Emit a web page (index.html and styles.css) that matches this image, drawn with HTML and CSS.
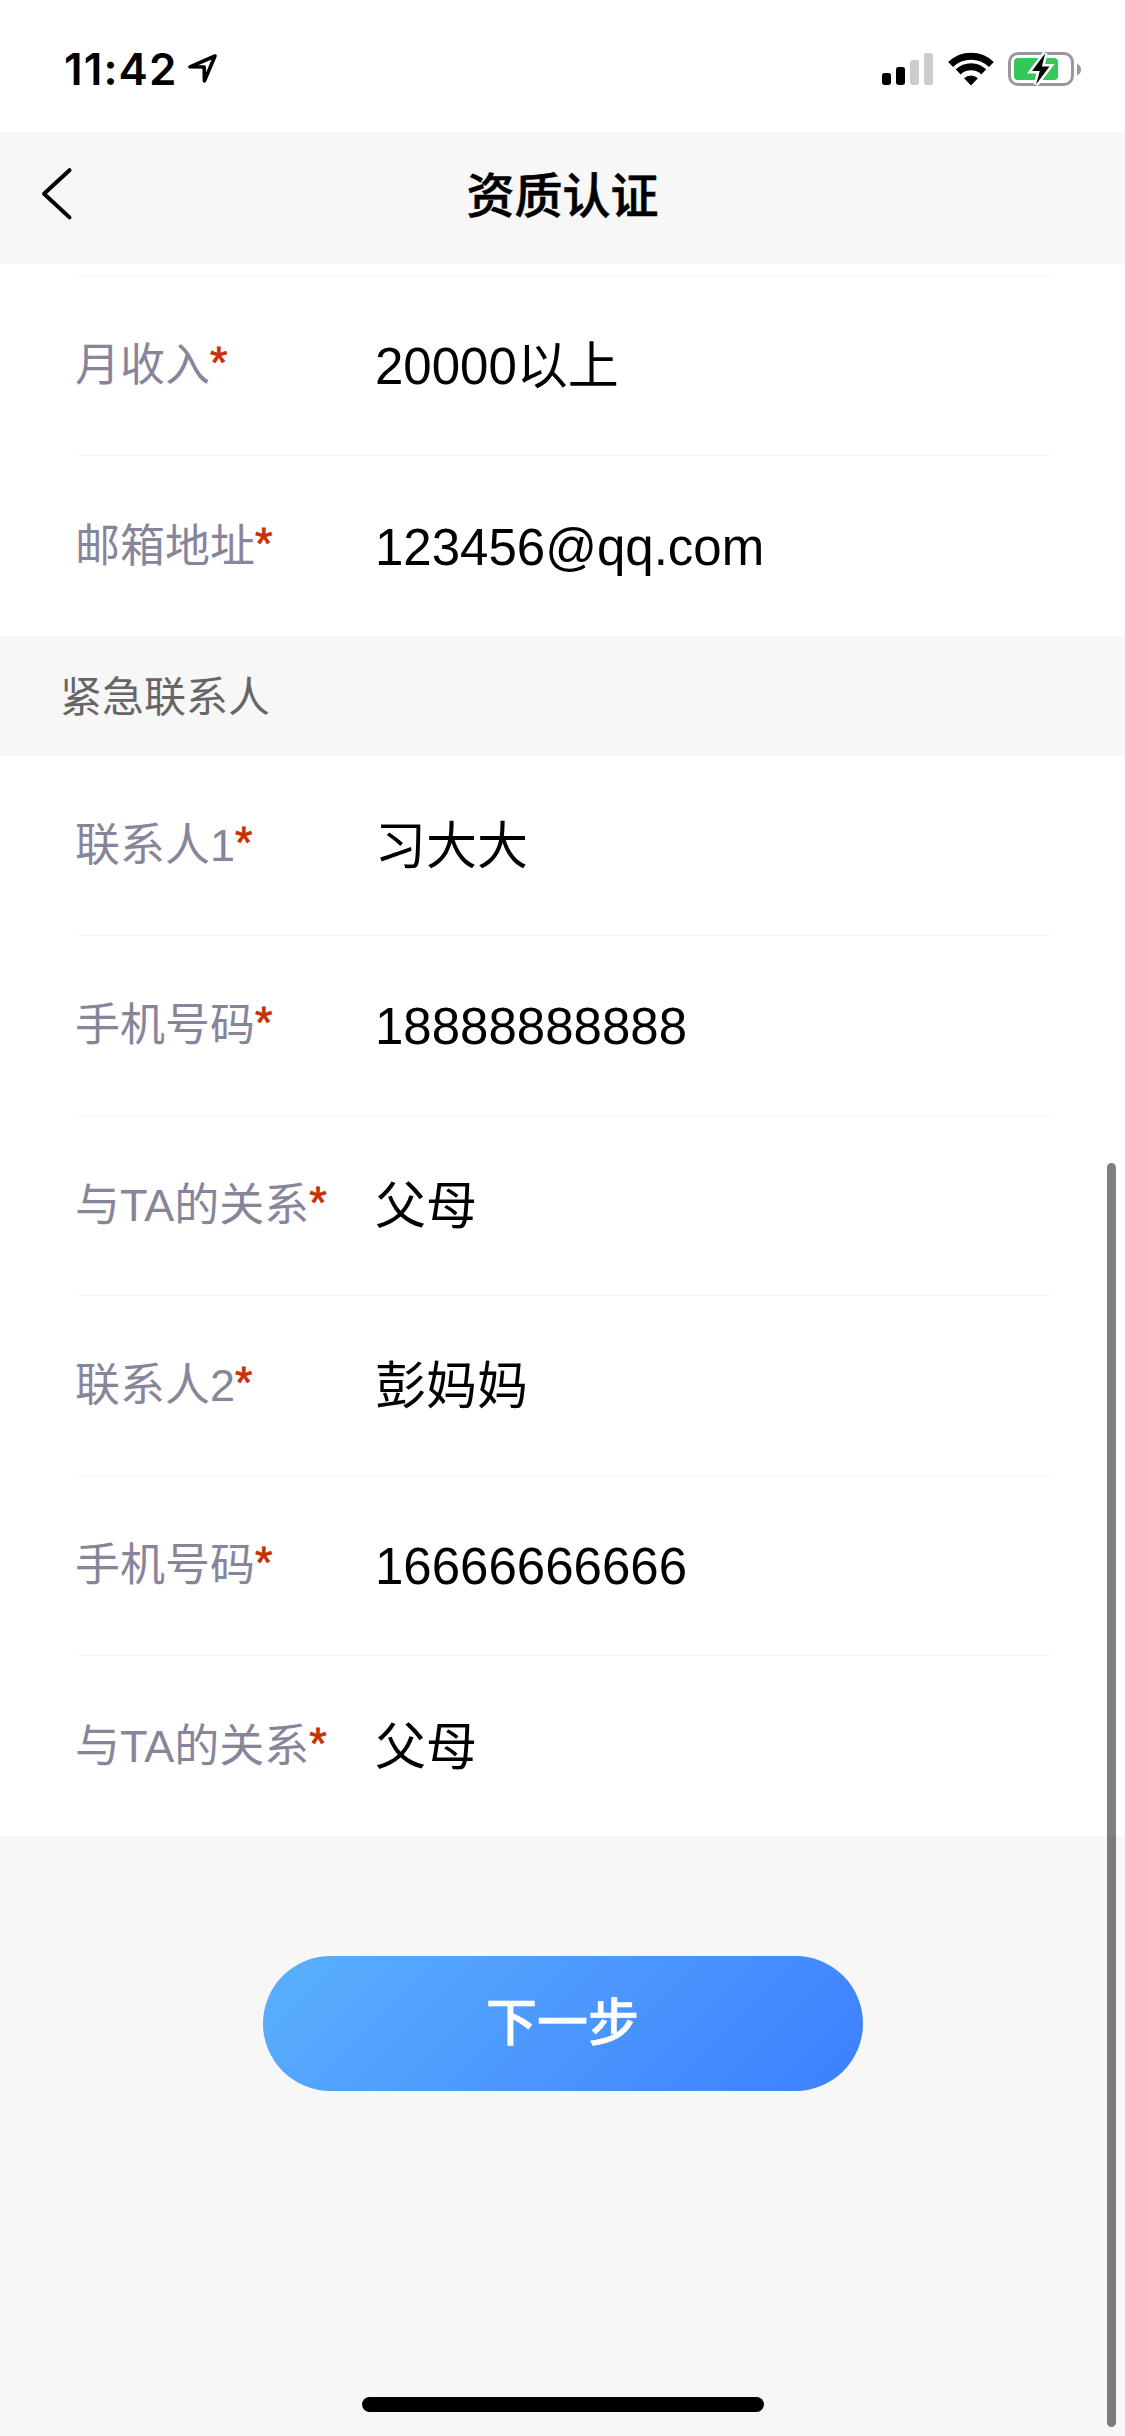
FILE: index.html
```html
<!DOCTYPE html>
<html lang="zh-CN">
<head>
  <meta charset="UTF-8" />
  <meta name="viewport" content="width=device-width, initial-scale=1.0"/>
  <title>资质认证</title>
  <link rel="stylesheet" href="styles.css">
</head>
<body>
  <div class="status-bar">
    <div class="status-left">
      <span class="time">11:42</span>
      <svg class="icon-location" width="32" height="32" viewBox="0 0 32 32">
        <path d="M28 4 L3 14.8 L17.2 15 L17.4 29 Z" fill="none" stroke="#000" stroke-width="3.6" stroke-linejoin="round"/>
      </svg>
    </div>
    <div class="status-right">
      <svg width="52" height="34" viewBox="0 0 52 34">
        <rect x="0" y="21" width="9" height="12" rx="2.4"/>
        <rect x="14" y="15" width="9" height="18" rx="2.4"/>
        <rect x="28" y="8" width="9" height="25" rx="2.4" fill="#ccc"/>
        <rect x="42" y="1" width="9" height="32" rx="2.4" fill="#ccc"/>
      </svg>
      <svg width="46" height="34" viewBox="0 0 46 34">
        <g fill="none" stroke="#000" stroke-width="7">
          <path d="M2.6 12.5 A29.3 29.3 0 0 1 43.4 12.5"/>
          <path d="M10.2 19.9 A18.6 18.6 0 0 1 35.8 19.9"/>
        </g>
        <path d="M23 33.5 L16.1 26.2 A10.3 10.3 0 0 1 29.9 26.2 Z"/>
      </svg>
      <svg width="75" height="36" viewBox="0 0 75 36">
        <rect x="1.5" y="2.5" width="63" height="31" rx="8.5" fill="none" stroke="#999" stroke-width="3"/>
        <rect x="6" y="7" width="44" height="22" rx="4" fill="#34c759"/>
        <path d="M69 12.5 Q73 14.5 73 18.5 Q73 22.5 69 24.5 Z" fill="#999"/>
        <path d="M37.2 2.3 L24 20 H31.8 L28 33.4 L41.5 15.6 H33.9 Z" stroke="#fff" stroke-width="5"/>
        <path d="M37.2 2.3 L24 20 H31.8 L28 33.4 L41.5 15.6 H33.9 Z"/>
      </svg>
    </div>
  </div>

  <header class="nav">
    <a href="#" class="back">
      <svg width="32" height="54" viewBox="0 0 32 54">
        <path d="M28.5 3.2 L3 26.7 L28.5 50.4" fill="none" stroke="#000" stroke-width="4" stroke-linecap="round" stroke-linejoin="round"/>
      </svg>
    </a>
    <h1>资质认证</h1>
  </header>

  <main>
    <div class="form-group">
      <div class="row-rest"></div>
      <div class="row">
        <label>月收入<i>*</i></label>
        <span class="value">20000以上</span>
      </div>
      <div class="row">
        <label>邮箱地址<i>*</i></label>
        <span class="value">123456@qq.com</span>
      </div>
    </div>

    <h2 class="section-title">紧急联系人</h2>

    <div class="form-group">
      <div class="row">
        <label>联系人1<i>*</i></label>
        <span class="value">习大大</span>
      </div>
      <div class="row">
        <label>手机号码<i>*</i></label>
        <span class="value">18888888888</span>
      </div>
      <div class="row">
        <label>与TA的关系<i>*</i></label>
        <span class="value">父母</span>
      </div>
      <div class="row">
        <label>联系人2<i>*</i></label>
        <span class="value">彭妈妈</span>
      </div>
      <div class="row">
        <label>手机号码<i>*</i></label>
        <span class="value">16666666666</span>
      </div>
      <div class="row">
        <label>与TA的关系<i>*</i></label>
        <span class="value">父母</span>
      </div>
    </div>

    <button class="btn-next">下一步</button>
  </main>

  <div class="scrollbar"></div>
  <div class="home-indicator"></div>
</body>
</html>
```
FILE: styles.css
```css
* {
  box-sizing: border-box;
}

body {
  margin: 0;
  height: 2436px;
  overflow: hidden;
  background: #f7f7f7;
  color: #000;
  font-family: "Liberation Sans", "Noto Sans CJK SC", sans-serif;
}

svg {
  display: block;
}

/* ---- status bar ---- */
.status-bar {
  height: 132px;
  padding: 0 42px 0 64px;
  background: #fff;
  display: flex;
  justify-content: space-between;
}

.status-left {
  display: flex;
  padding-top: 42px;
}

.time {
  width: 123px;
  font-family: Inter, sans-serif;
  font-size: 44px;
  font-weight: 600;
  line-height: 54px;
  letter-spacing: 1.1px;
  white-space: nowrap;
}

.icon-location {
  margin-top: 10px;
}

.status-right {
  display: flex;
  gap: 14px;
  padding-top: 52px;
}

.status-right svg:last-child {
  margin-top: -1px;
}

/* ---- nav ---- */
.nav {
  height: 132px;
  display: grid;
  grid-template-columns: 200px 1fr 200px;
  align-items: center;
}

.back {
  padding: 0 0 8px 41px;
}

.nav h1 {
  margin: 0;
  padding-bottom: 2px;
  font-size: 48px;
  font-weight: 500;
  line-height: 66px;
  text-align: center;
  -webkit-text-stroke: 0.6px #000;
}

/* ---- form ---- */
.form-group {
  padding: 0 75px;
  background: #fff;
}

.row-rest {
  height: 12px;
  border-bottom: 1px solid #f5f5f5;
}

.row {
  height: 180px;
  display: flex;
  align-items: center;
  border-bottom: 1px solid #f5f5f5;
}

.row:last-child {
  border-bottom: none;
}

.row label {
  width: 300px;
  padding-top: 1px;
  font-size: 45px;
  line-height: 60px;
  color: #88859b;
  white-space: nowrap;
}

.row label i {
  font-style: normal;
  color: #c73000;
  -webkit-text-stroke: 0.8px #c73000;
  vertical-align: 3px;
  line-height: 1;
}

.value {
  padding-top: 3px;
  font-size: 51px;
  line-height: 60px;
}

.section-title {
  margin: 0;
  height: 120px;
  padding-left: 60px;
  font-size: 42px;
  font-weight: 400;
  line-height: 123px;
  color: #666;
}

.btn-next {
  display: block;
  width: 600px;
  height: 135px;
  margin: 120px auto 0;
  padding: 0 0 9px;
  border: none;
  border-radius: 68px;
  background: linear-gradient(135deg, #5ab1fd, #3d7eff);
  color: #fff;
  font-family: inherit;
  font-size: 51px;
  font-weight: 500;
  -webkit-text-stroke: 0.6px #fff;
}

/* ---- overlays ---- */
.scrollbar {
  position: fixed;
  top: 1163px;
  right: 9px;
  width: 9px;
  height: 1264px;
  border-radius: 5px;
  background: rgba(0, 0, 0, 0.5);
}

.home-indicator {
  position: fixed;
  left: 362px;
  bottom: 24px;
  width: 402px;
  height: 15px;
  border-radius: 8px;
  background: #000;
}
```
